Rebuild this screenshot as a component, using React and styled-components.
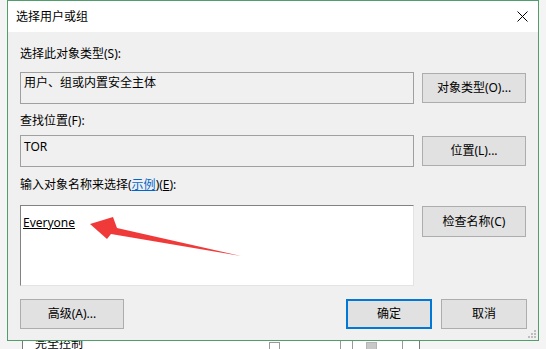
import React from "react";
import styled, { createGlobalStyle } from "styled-components";

const Global = createGlobalStyle`
  html, body { margin: 0; padding: 0; }
  body {
    background: #f4f4f4;
    width: 546px;
    height: 349px;
    overflow: hidden;
    font-family: "Noto Sans", "Noto Sans CJK SC", sans-serif;
    font-size: 12px;
    color: #000;
  }
`;

const Page = styled.div`
  display: flex;
  flex-direction: column;
  width: 546px;
  height: 349px;
  overflow: hidden;
`;

const Dialog = styled.div`
  position: relative;
  margin-left: 7px;
  width: 532px;
  height: 341px;
  box-sizing: border-box;
  border: 1px solid #4f9e6c;
  background: #f0f0f0;
  display: flex;
  flex-direction: column;
  flex-shrink: 0;
`;

const TitleBar = styled.div`
  height: 31px;
  background: #ffffff;
  display: flex;
  align-items: center;
  justify-content: space-between;
  padding: 0 9px 0 8px;
  flex-shrink: 0;
`;

const Title = styled.span`
  font-size: 12px;
  line-height: 16px;
`;

const Close = styled.svg`
  width: 11px;
  height: 11px;
  margin-right: 1px;
`;

const Body = styled.div`
  position: relative;
  flex: 1;
  display: flex;
  flex-direction: column;
  padding: 14px 11px 0 12px;
`;

const Label = styled.div`
  line-height: 16px;
  height: 16px;
  margin-top: ${(p) => p.$mt || 0}px;
  white-space: nowrap;
`;

const Row = styled.div`
  display: flex;
  align-items: ${(p) => (p.$top ? "flex-start" : "center")};
  gap: 8px;
  margin-top: ${(p) => p.$mt || 0}px;
`;

const Field = styled.div`
  box-sizing: border-box;
  width: 394px;
  height: ${(p) => p.$h}px;
  padding: ${(p) => p.$pad};
  line-height: 16px;
  border: 1px solid;
  border-color: ${(p) =>
    p.$white ? "#828282 #e3e3e3 #e3e3e3 #828282" : "#a0a0a0"};
  background: ${(p) => (p.$white ? "#ffffff" : "#f0f0f0")};
`;

const Button = styled.div`
  box-sizing: border-box;
  width: ${(p) => p.$w || 104}px;
  height: ${(p) => p.$h || 30}px;
  margin-top: ${(p) => p.$mt || 0}px;
  display: flex;
  align-items: center;
  justify-content: center;
  background: #e1e1e1;
  border: ${(p) => (p.$default ? "2px solid #0078d7" : "1px solid #adadad")};
  line-height: 16px;
  white-space: nowrap;
`;

const Footer = styled.div`
  display: flex;
  align-items: center;
  margin-top: 13px;
  gap: 9px;
`;

const Spacer = styled.div`
  flex: 1;
`;

const Link = styled.span`
  color: #0066cc;
  text-decoration: underline;
`;

const U = styled.span`
  text-decoration: underline;
`;

const Name = styled.span`
  text-decoration: underline;
`;

const Arrow = styled.svg`
  position: absolute;
  left: 0;
  top: 0;
  width: 546px;
  height: 349px;
  pointer-events: none;
`;

const Grip = styled.svg`
  position: absolute;
  right: 1px;
  bottom: 1px;
  width: 10px;
  height: 10px;
`;

const Backdrop = styled.div`
  display: flex;
  margin-left: 22px;
  width: 396px;
  height: 20px;
  flex-shrink: 0;
  background: #ffffff;
  border-left: 1px solid #7a7a7a;
  border-right: 1px solid #7a7a7a;
`;

const Cell = styled.div`
  box-sizing: border-box;
  width: ${(p) => p.$w}px;
  height: 20px;
  padding-left: ${(p) => p.$pl || 0}px;
  border-right: ${(p) => (p.$line ? "1px solid #9a9a9a" : "none")};
  line-height: 14px;
  margin-top: -4px;
  white-space: nowrap;
  display: flex;
  align-items: flex-start;
`;

const Check = styled.div`
  width: 11px;
  height: 11px;
  box-sizing: border-box;
  border: 1px solid ${(p) => (p.$gray ? "#b5b5b5" : "#9a9a9a")};
  background: ${(p) => (p.$gray ? "#c8c8c8" : "#fff")};
  margin-top: 5px;
`;

export default function App() {
  return (
    <Page>
      <Global />
      <Dialog>
        <TitleBar>
          <Title>选择用户或组</Title>
          <Close viewBox="0 0 11 11">
            <path d="M0.5 0.5 L10.5 10.5 M10.5 0.5 L0.5 10.5" stroke="#000" strokeWidth="1" fill="none" />
          </Close>
        </TitleBar>
        <Body>
          <Label>选择此对象类型(S):</Label>
          <Row $mt={10}>
            <Field $h={32} $pad="2px 3px">用户、组或内置安全主体</Field>
            <Button>对象类型(O)...</Button>
          </Row>
          <Label $mt={9}>查找位置(F):</Label>
          <Row $mt={6}>
            <Field $h={32} $pad="3px 3px">TOR</Field>
            <Button>位置(L)...</Button>
          </Row>
          <Label $mt={10}>
            输入对象名称来选择(<Link>示例</Link>)(<U>E</U>):
          </Label>
          <Row $top $mt={12}>
            <Field $white $h={81} $pad="9px 2px">
              <Name>Everyone</Name>
            </Field>
            <Button $mt={1} $h={31}>检查名称(C)</Button>
          </Row>
          <Footer>
            <Button $w={104}>高级(A)...</Button>
            <Spacer />
            <Button $default $w={86}>确定</Button>
            <Button $w={86}>取消</Button>
          </Footer>
        </Body>
        <Grip viewBox="0 0 10 10">
          {[
            [8, 2], [8, 5], [5, 5], [8, 8], [5, 8], [2, 8],
          ].map(([x, y], i) => (
            <rect key={i} x={x - 1} y={y - 1} width="2" height="2" fill="#bdbdbd" />
          ))}
        </Grip>
      </Dialog>
      <Backdrop>
        <Cell $w={246} $pl={12}>完全控制</Cell>
        <Cell $w={13}><Check /></Cell>
        <Cell $w={59} $line />
        <Cell $w={12} $line />
        <Cell $w={27} $pl={13}><Check $gray /></Cell>
        <Cell $w={23} $line />
      </Backdrop>
      <Arrow viewBox="0 0 546 349">
        <polygon
          points="90,224 113,217 117,228 241,256 111,234 107,239"
          fill="#f03a3a"
        />
      </Arrow>
    </Page>
  );
}
